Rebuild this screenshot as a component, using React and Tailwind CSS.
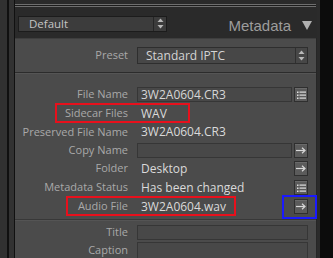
import React from "react";

const font = { fontFamily: '"Open Sans", "Noto Sans", sans-serif' };

function ListIcon() {
  return (
    <svg width="9" height="8" viewBox="0 0 9 8" className="block">
      <rect x="0" y="0.5" width="1.5" height="1.5" fill="#e0e0e0" />
      <rect x="0" y="3.5" width="1.5" height="1.5" fill="#e0e0e0" />
      <rect x="0" y="6.5" width="1.5" height="1.5" fill="#e0e0e0" />
      <rect x="2.5" y="0.5" width="6.5" height="1.2" fill="#e0e0e0" />
      <rect x="2.5" y="3.5" width="6.5" height="1.2" fill="#e0e0e0" />
      <rect x="2.5" y="6.5" width="6.5" height="1.2" fill="#e0e0e0" />
    </svg>
  );
}

function ArrowIcon() {
  return (
    <svg width="10" height="7" viewBox="0 0 10 7" className="block">
      <path d="M0 3.5H8.5" stroke="#d8d8d8" strokeWidth="1.2" />
      <path d="M6 0.8L9 3.5L6 6.2" stroke="#d8d8d8" strokeWidth="1.2" fill="none" />
    </svg>
  );
}

function Spinner() {
  return (
    <svg width="7" height="11" viewBox="0 0 7 11" className="block">
      <path d="M3.5 0.5L6.5 4H0.5Z" fill="#b8b8b8" />
      <path d="M3.5 10.5L6.5 7H0.5Z" fill="#b8b8b8" />
    </svg>
  );
}

function SmallButton({ kind }) {
  return (
    <div className="w-[14px] h-[15px] shrink-0 flex items-center justify-center bg-[#5b5b5b] border border-[#2f2f2f] shadow-[inset_0_1px_0_#6a6a6a]">
      {kind === "list" ? <ListIcon /> : <ArrowIcon />}
    </div>
  );
}

function Label({ children, className = "" }) {
  return (
    <div className={`w-[114px] shrink-0 pr-[1px] text-right text-[11px] text-[#a9a9a9] whitespace-nowrap ${className}`}>
      {children}
    </div>
  );
}

function Row({ label, value, box, button, h = "h-[19px]" }) {
  return (
    <div className={`flex items-center shrink-0 ${h}`}>
      <Label>{label}</Label>
      <div className="flex-1 flex items-center ml-[8px] mr-[8px] gap-[2px]">
        {box ? (
          <div className="flex-1 h-[15px] flex items-center px-[3px] bg-[#484848] border border-[#363636] text-[12px] text-[#d6d6d6]">
            {value}
          </div>
        ) : (
          <div className="flex-1 px-[4px] text-[12px] text-[#dadada] whitespace-nowrap">{value}</div>
        )}
        {button && <SmallButton kind={button} />}
      </div>
    </div>
  );
}

export default function App() {
  return (
    <div className="relative w-[333px] h-[258px] flex bg-[#0b0b0b] overflow-hidden" style={font}>
      <div className="w-[7px] bg-[#313131]" />
      <div className="w-[2px] bg-[#101010]" />
      <div className="w-[5px] bg-[#323232]" />
      <div className="w-[1px] bg-[#111]" />

      <div className="w-[302px] flex flex-col min-h-0">
        {/* header */}
        <div className="h-[38px] shrink-0 bg-[#2a2a2a] flex flex-col">
          <div className="mt-[4px] h-[3px] border-t border-b border-[#6e6e6e] bg-[#1c1c1c] mr-[1px]" />
          <div className="flex items-center mt-[7px]">
            <div className="ml-[3px] w-[149px] h-[16px] flex items-center bg-[#3c3c3c] border border-[#1c1c1c]">
              <div className="flex-1 pl-[10px] text-[11.5px] text-[#c4c4c4]">Default</div>
              <div className="w-[13px] h-full flex items-center justify-center border-l border-[#262626]">
                <Spinner />
              </div>
            </div>
            <div className="ml-auto flex items-center pr-[5px]">
              <span className="text-[15px] text-[#9c9c9c] leading-none mt-[4px]" style={{ fontFamily: '"Liberation Sans", sans-serif' }}>
                Metadata
              </span>
              <svg width="10" height="9" viewBox="0 0 10 9" className="ml-[11px] mt-[4px]">
                <path d="M0 0H10L5 9Z" fill="#b0b0b0" />
              </svg>
            </div>
          </div>
        </div>

        {/* panel */}
        <div className="flex-1 min-h-0 overflow-hidden flex bg-[#4b4b4b]">
          <div className="flex-1 flex flex-col border-t border-[#3e3e3e]">
            <div className="flex items-center py-[8px] shrink-0">
              <Label>Preset</Label>
              <div className="ml-[8px] mr-[8px] flex-1 h-[17px] flex items-center bg-[#474747] border border-[#2e2e2e]">
                <div className="flex-1 pl-[8px] text-[12px] text-[#d4d4d4]">Standard IPTC</div>
                <div className="w-[12px] h-full flex items-center justify-center border-l border-[#303030]">
                  <Spinner />
                </div>
              </div>
            </div>
            <div className="h-[1px] shrink-0 bg-[#2c2c2c]" />
            <div className="h-[1px] shrink-0 bg-[#555]" />

            <div className="pt-[11px] flex flex-col shrink-0">
              <Row label="File Name" value="3W2A0604.CR3" box button="list" />
              <Row label="Sidecar Files" value="WAV" />
              <Row label="Preserved File Name" value="3W2A0604.CR3" h="h-[18px]" />
              <Row label="Copy Name" value="" box button="arrow" h="h-[18px]" />
              <Row label="Folder" value="Desktop" button="arrow" />
              <Row label="Metadata Status" value="Has been changed" button="list" />
              <Row label="Audio File" value="3W2A0604.wav" button="arrow" />
            </div>

            <div className="mt-[3px] h-[1px] shrink-0 bg-[#383838]" />
            <div className="h-[1px] shrink-0 bg-[#545454]" />

            <div className="pt-[4px] flex flex-col gap-[2px] shrink-0">
              <div className="flex items-center h-[15px]">
                <Label>Title</Label>
                <div className="ml-[8px] mr-[8px] flex-1 h-[15px] bg-[#484848] border border-[#363636]" />
              </div>
              <div className="flex items-start h-[30px]">
                <Label className="leading-[15px]">Caption</Label>
                <div className="ml-[8px] mr-[8px] flex-1 h-[30px] bg-[#484848] border border-[#363636]" />
              </div>
            </div>
          </div>
          <div className="w-[1px] bg-[#262626]" />
        </div>
      </div>

      <div className="w-[3px] bg-[#2b2b2b]" />
      <div className="flex-1 bg-[#0c0c0c]" />

      {/* annotations */}
      <div className="absolute left-[55px] top-[103px] w-[135px] h-[20px] border-2 border-[#e8101c]" />
      <div className="absolute left-[66px] top-[196px] w-[170px] h-[20px] border-2 border-[#e8101c]" />
      <div className="absolute left-[282px] top-[195px] w-[35px] h-[24px] border-2 border-[#1a1aff]" />
    </div>
  );
}
